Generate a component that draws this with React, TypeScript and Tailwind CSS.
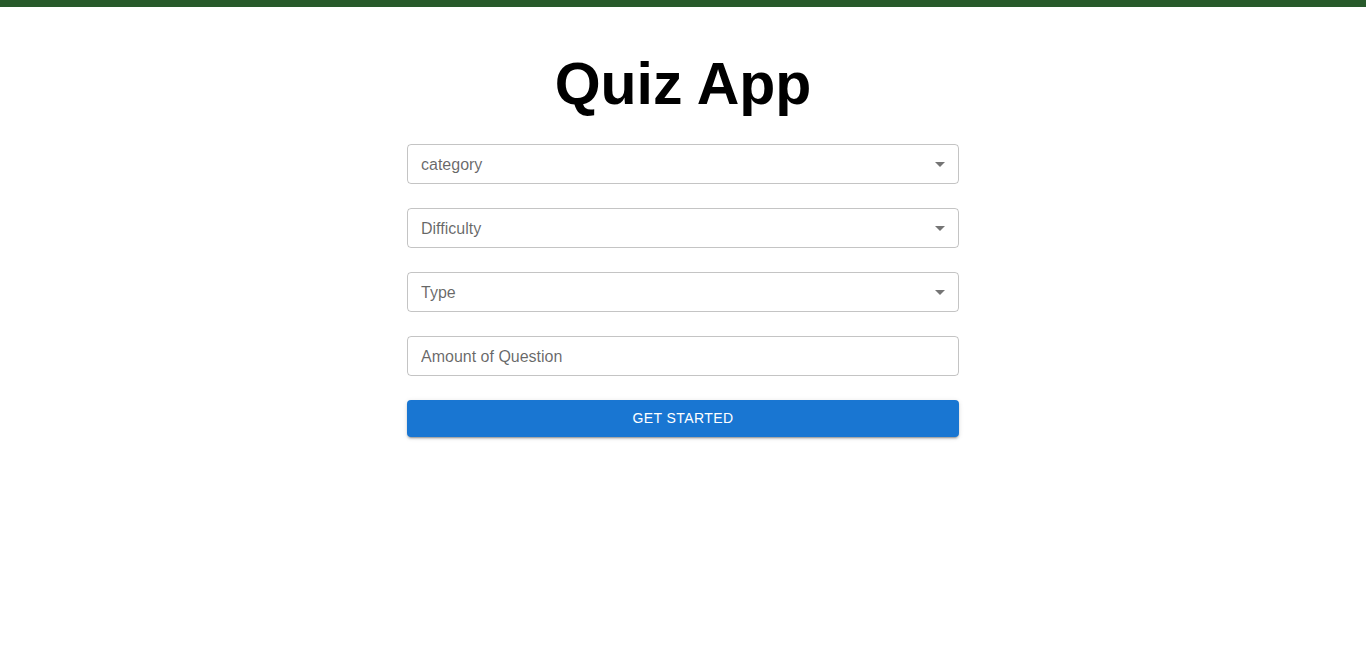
const fields = ['category', 'Difficulty', 'Type']

function ArrowDropDown() {
  return (
    <svg viewBox="0 0 24 24" className="absolute right-[6px] top-1/2 h-6 w-6 -translate-y-1/2 fill-[rgba(0,0,0,0.54)]">
      <path d="M7 10l5 5 5-5z" />
    </svg>
  )
}

function SelectField({ label }: { label: string }) {
  return (
    <div className="relative flex h-10 items-center rounded border border-[rgba(0,0,0,0.23)] px-[13px] pt-px text-base text-[rgba(0,0,0,0.6)]">
      <span>{label}</span>
      <ArrowDropDown />
    </div>
  )
}

export default function App() {
  return (
    <div className="min-h-screen bg-white font-['Liberation_Sans','Helvetica','Arial',sans-serif]">
      <div className="h-[7px] bg-[#285a2b]" />
      <div className="mx-auto flex w-[552px] flex-col">
        <h1 className="mt-[48px] text-center text-[59px] leading-none font-bold text-black">
          Quiz App
        </h1>
        <div className="mt-[30px] flex flex-col gap-6">
          {fields.map((f) => (
            <SelectField key={f} label={f} />
          ))}
          <input
            placeholder="Amount of Question"
            className="h-10 rounded border border-[rgba(0,0,0,0.23)] px-[13px] pt-px text-base text-black outline-none placeholder:text-[rgba(0,0,0,0.6)]"
          />
          <button className="h-[37px] rounded bg-[#1976d2] pb-[2px] text-sm font-normal tracking-[0.02857em] text-white uppercase shadow-[0_3px_1px_-2px_rgba(0,0,0,0.2),0_2px_2px_0_rgba(0,0,0,0.14),0_1px_5px_0_rgba(0,0,0,0.12)]">
            Get Started
          </button>
        </div>
      </div>
    </div>
  )
}
